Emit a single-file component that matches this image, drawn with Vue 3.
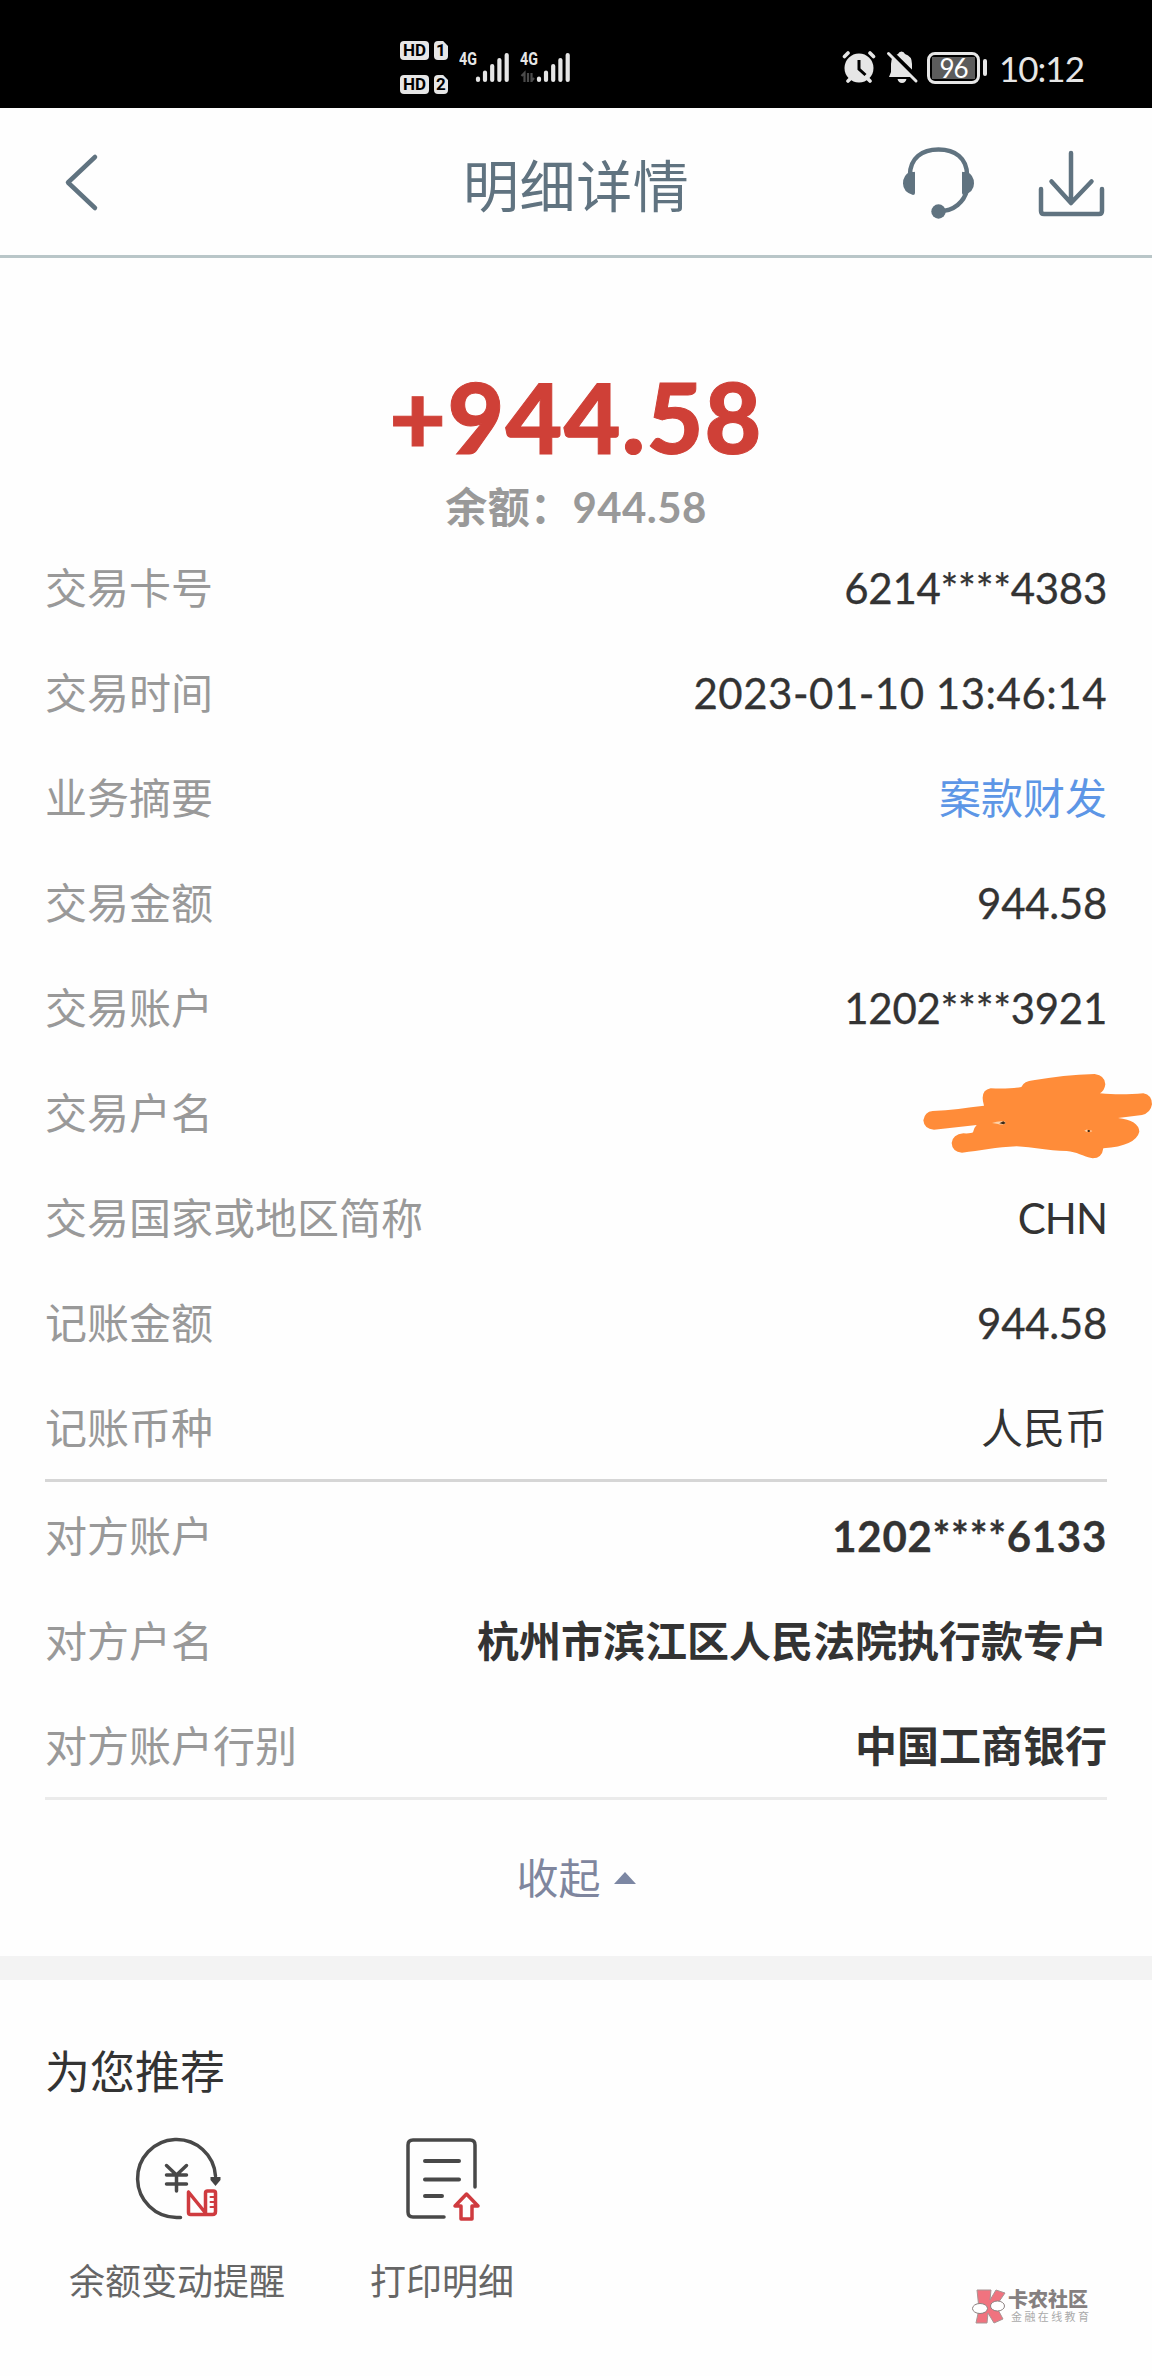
<template>
  <div class="page">
    <div class="status-bar">
      <div class="sims">
        <span v-for="n in 2" :key="n" class="sim">
          <b class="hd">HD</b>
          <b class="slot">{{ n }}</b>
        </span>
      </div>
      <div v-for="n in 2" :key="'net' + n" class="signal">
        <span class="net">4G</span>
        <svg class="bars" width="52" height="34" viewBox="0 0 52 34">
          <path
            v-if="n === 2"
            d="M4.5 32V23L1.5 26M8 23v9M11.500 32v-9M14 28l-2.500 3"
            stroke="#4a4a4a"
            stroke-width="2.200"
            fill="none"
          />
          <g stroke="#e6e6e6" stroke-width="4.200" stroke-linecap="round">
            <path d="M19 28.500V30M26 22.500V30M33.200 16V30M40.400 10V30M47.700 5V30" />
          </g>
        </svg>
      </div>
      <svg class="alarm" width="34" height="34" viewBox="0 0 34 34">
        <circle cx="17" cy="18" r="14.500" fill="#e6e6e6" />
        <g stroke="#e6e6e6" stroke-width="3.600" stroke-linecap="round">
          <path d="M2.500 6.500l3.500-3.500M31.500 6.500L28 3M6 31l4-4M28 31l-4-4" />
        </g>
        <path d="M17 10v9l6.500 6" stroke="#000" stroke-width="3" fill="none" />
      </svg>
      <svg class="bell" width="34" height="34" viewBox="0 0 34 34">
        <path d="M4 27h25l-2-4V14q0-8-7-10-1-2.500-3.500-2.500T13 4q-7 2-7 10v8z" fill="#e6e6e6" />
        <path d="M12.500 29h9q-1 4-4.500 4t-4.500-4z" fill="#e6e6e6" />
        <path d="M4 .5l28 27.500" stroke="#000" stroke-width="5" />
        <path d="M3.500 3.500L31 31" stroke="#e6e6e6" stroke-width="3" stroke-linecap="round" />
      </svg>
      <div class="battery"><span>96</span></div>
      <i class="nub"></i>
      <span class="clock">10:12</span>
    </div>

    <header class="nav-bar">
      <svg class="back" width="40" height="60" viewBox="0 0 40 60">
        <path d="M35 5L8 30.500 35 56" />
      </svg>
      <h1>明细详情</h1>
      <svg class="service" width="76" height="76" viewBox="0 0 76 76">
        <path d="M10 31C10 14 22 5.500 38.500 5.500S67 14 67 31" />
        <path d="M67 46C64 58 54 67 40 67" />
        <path class="solid" d="M14 28q1-1 1 1v20q0 2-2 2Q3 48 3 39.500T10 28zM63 28q-1-1-1 1v20q0 2 2 2 10-3 10-11.500T67 28z" />
        <circle class="solid" cx="38.500" cy="67.500" r="7.200" />
      </svg>
      <svg class="download" width="70" height="70" viewBox="0 0 70 70">
        <path d="M35 6v48M15.500 34.500L35 56l20.500-21.500M5 42v22q0 3 3 3h55q3 0 3-3V42" />
      </svg>
    </header>

    <section class="summary">
      <div class="amount">+944.58</div>
      <div class="balance">余额：<span>944.58</span></div>
    </section>

    <section class="details">
      <div v-for="row in details" :key="row.label" class="row">
        <span class="label">{{ row.label }}</span>
        <svg v-if="row.masked" class="scribble" width="252" height="105" viewBox="0 35 756 315">
          <path
            d="M98 182C150 180 200 172 252 166Q238 120 272 114C310 116 340 114 364 110Q372 92 400 90C460 80 520 72 584 71Q616 76 616 102Q614 120 600 129C650 134 690 132 730 129Q756 134 756 162Q752 188 726 194L654 203Q716 210 718 244Q708 286 610 294Q606 324 578 324C548 318 530 304 500 302C440 302 400 290 350 288C290 290 240 302 186 307Q156 304 155 278Q158 252 190 249Q214 250 219 246Q220 234 230 224L102 238Q72 236 70 210Q74 184 98 182z"
            fill="#ff8c39"
          />
          <path d="M276 218q22-8 40-4v6q-12 5-22 1z" fill="#ffd2a8" />
          <path d="M298 219l12-6 7 5-6 4zM563 239h6v6h-6z" fill="#3a2a18" />
          <path d="M553 241l9-4v9zM571 239l6 3-6 4z" fill="#ffd2a8" />
        </svg>
        <span v-else class="value" :class="row.type">{{ row.value }}</span>
      </div>
      <div class="divider"></div>
      <div class="counterparty">
        <div v-for="row in counterparty" :key="row.label" class="row">
          <span class="label">{{ row.label }}</span>
          <span class="value strong" :class="row.type">{{ row.value }}</span>
        </div>
      </div>
      <div class="divider light"></div>
    </section>

    <div class="collapse">
      <span>收起</span>
      <i class="triangle"></i>
    </div>

    <section class="recommend">
      <h2>为您推荐</h2>
      <div class="actions">
        <div class="action">
          <svg width="90" height="90" viewBox="-1.500 0 90 90">
            <path class="dark" d="M82 42A39 39 0 1 0 43 83.500h4" />
            <path d="M77 43h10v3l-5 6-5-6z" fill="#444" />
            <path class="dark" d="M33 31.500L43 41l10-9.500M33 41h20M33 50h20M43 41v16" />
            <path class="red" d="M55 58v20.500q0 2 2 2h22q3 0 3-3V59q0-2-2-2h-6q-2 0-2 2v20L55 58" />
            <path class="ticks" d="M77 63h5M77 68h5M77 73h5" />
          </svg>
          <span>余额变动提醒</span>
        </div>
        <div class="action">
          <svg width="90" height="90" viewBox="-1 0 90 90">
            <path class="dark" d="M77 53V11q0-5-5-5H15q-5 0-5 5v67q0 5 5 5h31" />
            <path class="dark thick" d="M27 27h34M27 45.500h34M27 62h17" />
            <path class="red" d="M68.500 60L57 72h6v13h11V72h6z" />
          </svg>
          <span>打印明细</span>
        </div>
      </div>
    </section>

    <div class="watermark">
      <svg width="36" height="38" viewBox="0 0 36 38">
        <path d="M6 2h14l-1 10 6-10 9 3-9 13 7 13-9 4-6-10-1 10H5l3-14z" fill="#f0737f" stroke="#a89494" />
        <g fill="#fff" stroke="#8c8080">
          <ellipse cx="9" cy="20.500" rx="7.500" ry="5" />
          <ellipse cx="26.500" cy="18" rx="7" ry="5" />
        </g>
      </svg>
      <div class="brand">
        <strong>卡农社区</strong>
        <span>金融在线教育</span>
      </div>
    </div>
  </div>
</template>

<script setup>
const details = [
  { label: '交易卡号', value: '6214****4383', type: 'card' },
  { label: '交易时间', value: '2023-01-10 13:46:14', type: 'time' },
  { label: '业务摘要', value: '案款财发', type: 'link' },
  { label: '交易金额', value: '944.58', type: 'money' },
  { label: '交易账户', value: '1202****3921', type: 'card' },
  { label: '交易户名', masked: true },
  { label: '交易国家或地区简称', value: 'CHN', type: 'code' },
  { label: '记账金额', value: '944.58', type: 'money' },
  { label: '记账币种', value: '人民币' }
]

const counterparty = [
  { label: '对方账户', value: '1202****6133', type: 'card' },
  { label: '对方户名', value: '杭州市滨江区人民法院执行款专户' },
  { label: '对方账户行别', value: '中国工商银行' }
]
</script>

<style>
body {
  background: #fefefe;
}
</style>

<style scoped>
.page {
  position: relative;
  width: 1152px;
  height: 2376px;
  overflow: hidden;
  background: #fefefe;
  font-family: Lato, 'Noto Sans CJK SC', sans-serif;
  color: #333;
}
.status-bar {
  display: flex;
  align-items: flex-start;
  height: 108px;
  padding: 26px 60px 0 400px;
  box-sizing: border-box;
  background: #000;
  color: #e6e6e6;
}
.sims {
  display: flex;
  flex-direction: column;
  gap: 15px;
  margin: 15px 11px 0 0;
}
.sim {
  display: flex;
  gap: 5px;
}
.hd,
.slot {
  height: 19px;
  border-radius: 4px;
  background: #e6e6e6;
  color: #000;
  font: 700 17px/19px Roboto, sans-serif;
  text-align: center;
}
.hd {
  width: 29px;
}
.slot {
  width: 14px;
  clip-path: polygon(0 0, 65% 0, 100% 26%, 100% 100%, 0 100%);
}
.signal {
  display: flex;
  flex-direction: column;
  width: 61px;
  height: 70px;
  padding-top: 24px;
  box-sizing: border-box;
}
.net {
  height: 17px;
  font: 700 19px/17px Roboto, sans-serif;
  transform: scaleX(0.75);
  transform-origin: 0 50%;
}
.bars {
  margin-top: -17px;
}
.alarm {
  margin: 24px 9px 0 261px;
}
.bell {
  margin: 24px 8px 0 0;
}
.battery {
  width: 53px;
  height: 32px;
  margin-top: 26px;
  padding: 2px;
  box-sizing: border-box;
  border: 3px solid #e6e6e6;
  border-radius: 8px;
}
.battery span {
  display: block;
  height: 22px;
  background: #5c5c5c;
  color: #fff;
  font: 400 26px/22px Lato, sans-serif;
  letter-spacing: -1px;
  text-align: center;
}
.nub {
  width: 4px;
  height: 17px;
  margin: 33px 12px 0 3px;
  border-radius: 2px;
  background: #e6e6e6;
}
.clock {
  margin-top: 20px;
  font-size: 35px;
  line-height: 44px;
  letter-spacing: -1px;
}
.nav-bar {
  display: flex;
  align-items: center;
  height: 150px;
  padding: 0 46px 0 60px;
  box-sizing: border-box;
  border-bottom: 3px solid #b9c6c8;
}
.nav-bar h1 {
  flex: 1;
  margin: 9px 0 0 363px;
  font-size: 56px;
  font-weight: 400;
  line-height: 80px;
  letter-spacing: 0.6px;
  color: #607380;
}
.nav-bar svg {
  fill: none;
  stroke: #607380;
  stroke-width: 4.5;
  stroke-linecap: round;
  stroke-linejoin: round;
}
.nav-bar .back {
  margin-top: 1px;
}
.nav-bar .solid {
  fill: #607380;
  stroke: none;
}
.service {
  margin-right: 60px;
}
.summary {
  padding-top: 108px;
  text-align: center;
}
.amount {
  height: 111px;
  font-size: 98px;
  font-weight: 900;
  line-height: 100px;
  letter-spacing: 1.3px;
  color: #cf4037;
  -webkit-text-stroke: 1px #cf4037;
}
.balance {
  height: 60px;
  font-size: 42px;
  font-weight: 700;
  line-height: 60px;
  letter-spacing: 0.4px;
  color: #999;
}
.details {
  padding: 0 45px;
}
.row {
  display: flex;
  align-items: center;
  justify-content: space-between;
  height: 105px;
  font-size: 42px;
  line-height: 60px;
}
.label,
.value {
  margin-top: -3px;
}
.label {
  color: #999;
}
.card,
.money {
  letter-spacing: -0.3px;
}
.card,
.money,
.time {
  -webkit-text-stroke: 0.3px #333;
}
.time {
  letter-spacing: 0.5px;
}
.code {
  letter-spacing: -1px;
}
.link {
  color: #5d96e6;
}
.strong {
  font-weight: 700;
}
.strong.card {
  letter-spacing: 0.7px;
}
.scribble {
  margin-right: -45px;
}
.divider {
  height: 3px;
  margin-top: -3px;
  background: #d6d6d6;
}
.divider.light {
  background: #ebebeb;
}
.counterparty {
  padding-top: 3px;
}
.collapse {
  display: flex;
  align-items: center;
  justify-content: center;
  gap: 13px;
  height: 156px;
  font-size: 42px;
  color: #7f869e;
}
.collapse span {
  margin-top: -5px;
}
.triangle {
  border: solid transparent;
  border-width: 0 11px 12px;
  border-bottom-color: #7c87a3;
}
.recommend {
  padding: 58px 45px 0;
  border-top: 24px solid #f3f3f3;
}
.recommend h2 {
  margin: 0;
  font-size: 45px;
  font-weight: 400;
  line-height: 68px;
}
.actions {
  display: flex;
  gap: 85px;
  padding: 28px 24px 0;
}
.action {
  display: flex;
  flex-direction: column;
  align-items: center;
  gap: 30px;
  font-size: 36px;
  line-height: 54px;
  color: #666;
}
.action svg {
  fill: none;
  stroke-linecap: round;
  stroke-linejoin: round;
}
.dark {
  stroke: #484848;
  stroke-width: 3.5;
}
.thick {
  stroke-width: 4;
}
.red {
  stroke: #cf3b3f;
  stroke-width: 3.5;
}
.ticks {
  stroke: #cf3b3f;
  stroke-width: 2;
}
.watermark {
  position: absolute;
  top: 2288px;
  left: 971px;
  display: flex;
  gap: 1px;
}
.brand {
  display: flex;
  flex-direction: column;
  color: #858080;
}
.brand strong {
  font-size: 20px;
  font-weight: 900;
  line-height: 22px;
}
.brand span {
  padding-left: 3px;
  font-size: 11px;
  line-height: 14px;
  letter-spacing: 2.4px;
  color: #aaa;
}
</style>
